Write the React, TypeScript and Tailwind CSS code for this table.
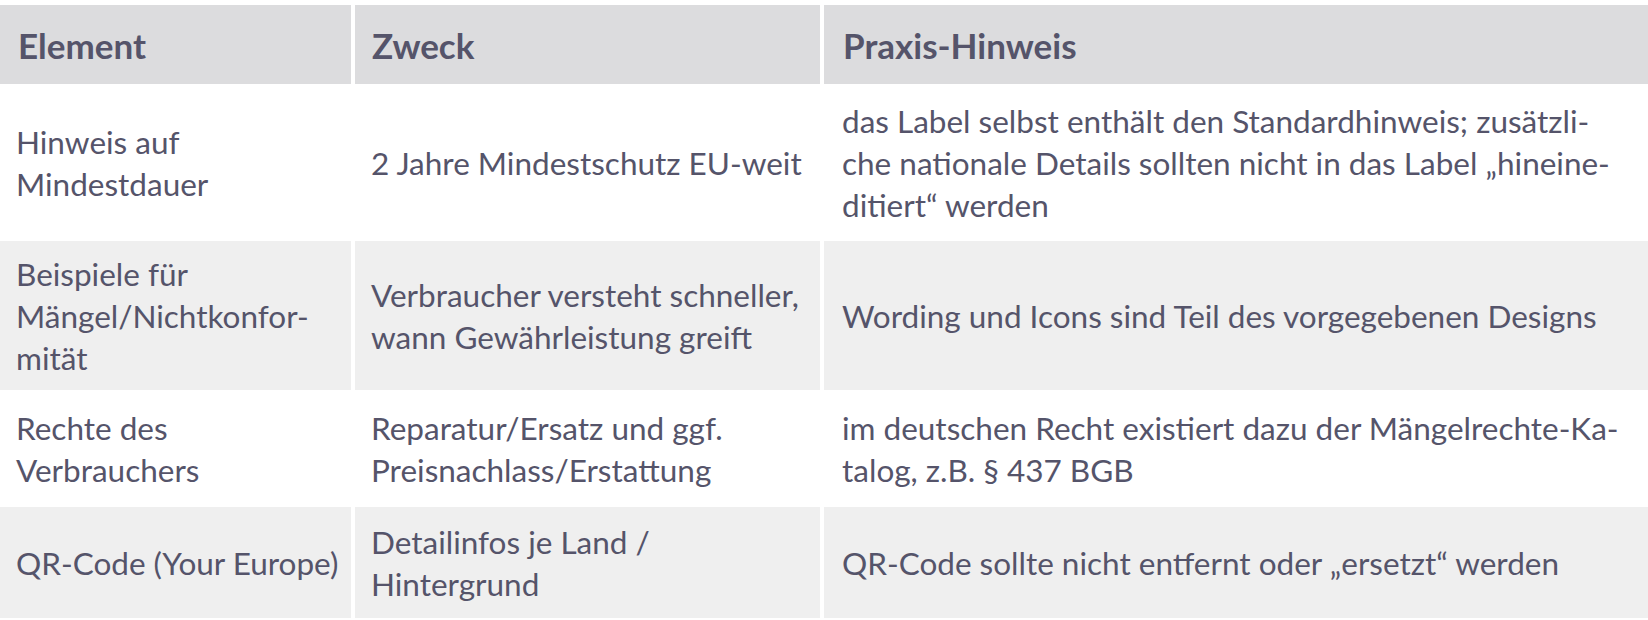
const rows = [
  {
    element: ["Hinweis auf", "Mindestdauer"],
    zweck: ["2 Jahre Mindestschutz EU-weit"],
    hinweis: [
      "das Label selbst enthält den Standardhinweis; zusätzli-",
      "che nationale Details sollten nicht in das Label „hineine-",
      "ditiert“ werden",
    ],
    height: "h-[157px]",
    bg: "bg-white",
  },
  {
    element: ["Beispiele für", "Mängel/Nichtkonfor-", "mität"],
    zweck: ["Verbraucher versteht schneller,", "wann Gewährleistung greift"],
    hinweis: ["Wording und Icons sind Teil des vorgegebenen Designs"],
    height: "h-[149px]",
    bg: "bg-[#efefef]",
  },
  {
    element: ["Rechte des", "Verbrauchers"],
    zweck: ["Reparatur/Ersatz und ggf.", "Preisnachlass/Erstattung"],
    hinweis: ["im deutschen Recht existiert dazu der Mängelrechte-Ka-", "talog, z.B. § 437 BGB"],
    height: "h-[117px]",
    bg: "bg-white",
  },
  {
    element: ["QR-Code (Your Europe)"],
    zweck: ["Detailinfos je Land /", "Hintergrund"],
    hinweis: ["QR-Code sollte nicht entfernt oder „ersetzt“ werden"],
    height: "h-[111px]",
    bg: "bg-[#efefef]",
  },
];

function Lines({ lines }: { lines: string[] }) {
  return (
    <>
      {lines.map((l, i) => (
        <span key={i} className="block whitespace-nowrap">
          {l}
        </span>
      ))}
    </>
  );
}

export default function App() {
  return (
    <div
      className="bg-white w-[1648px] h-[620px] pt-[5px] text-[#55546a]"
      style={{ fontFamily: "Lato, 'Noto Sans', sans-serif" }}
    >
      <table className="w-[1648px] border-collapse table-fixed text-[31.5px] leading-[42px]">
        <colgroup>
          <col className="w-[353px]" />
          <col className="w-[469px]" />
          <col className="w-[826px]" />
        </colgroup>
        <thead>
          <tr className="h-[79px] bg-[#dcdcde] text-[35px]">
            <th className="text-left font-bold pl-[18px] align-middle">Element</th>
            <th className="text-left font-bold pl-[17px] align-middle border-l-4 border-white">Zweck</th>
            <th className="text-left font-bold pl-[19px] align-middle border-l-4 border-white">Praxis-Hinweis</th>
          </tr>
        </thead>
        <tbody>
          {rows.map((r, i) => (
            <tr key={i} className={`${r.height} ${r.bg}`}>
              <td className="pl-[16px] align-middle">
                <Lines lines={r.element} />
              </td>
              <td className="pl-[16px] align-middle border-l-4 border-white">
                <Lines lines={r.zweck} />
              </td>
              <td className="pl-[18px] align-middle border-l-4 border-white">
                <Lines lines={r.hinweis} />
              </td>
            </tr>
          ))}
        </tbody>
      </table>
    </div>
  );
}
